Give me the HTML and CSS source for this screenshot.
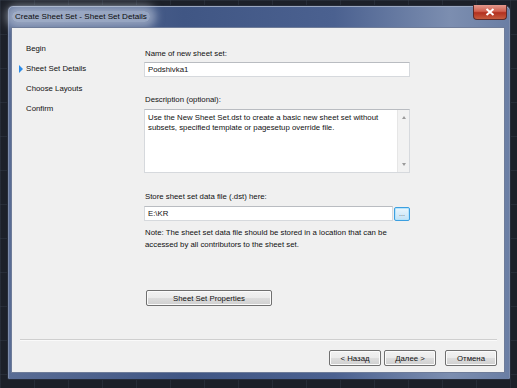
FILE: index.html
```html
<!DOCTYPE html>
<html lang="en">
<head>
    <meta charset="UTF-8">
    <title>Create Sheet Set - Sheet Set Details</title>
    <link rel="stylesheet" href="styles.css">
</head>
<body>
    <div class="window">
        <!-- Title bar -->
        <div class="titlebar">
            <span class="title">Create Sheet Set - Sheet Set Details</span>
            <div class="close">
                <svg width="10" height="8" viewBox="0 0 10 8"><path d="M1.5 1 L8.5 7 M8.5 1 L1.5 7" stroke="#fff" stroke-width="2"/></svg>
            </div>
        </div>

        <div class="client">
            <div class="content">
                <!-- Wizard steps -->
                <ul class="steps">
                    <li>Begin</li>
                    <li class="current">Sheet Set Details</li>
                    <li>Choose Layouts</li>
                    <li>Confirm</li>
                </ul>

                <!-- Page fields -->
                <div class="page">
                    <label class="label first">Name of new sheet set:</label>
                    <div class="input">Podshivka1</div>

                    <label class="label desc">Description (optional):</label>
                    <div class="textarea">
                        <div class="textarea-text">Use the New Sheet Set.dst to create a basic new sheet set without subsets, specified template or pagesetup override file.</div>
                        <div class="scrollbar">
                            <span class="arrow up"></span>
                            <span class="arrow down"></span>
                        </div>
                    </div>

                    <label class="label store">Store sheet set data file (.dst) here:</label>
                    <div class="path-row">
                        <div class="input path">E:\KR</div>
                        <button class="browse">...</button>
                    </div>
                    <p class="note">Note: The sheet set data file should be stored in a location that can be accessed by all contributors to the sheet set.</p>

                    <button class="btn props">Sheet Set Properties</button>
                </div>
            </div>

            <div class="footer">
                <button class="btn nav">&lt; Назад</button>
                <button class="btn nav next">Далее &gt;</button>
                <button class="btn nav">Отмена</button>
            </div>
        </div>
    </div>
</body>
</html>
```

FILE: styles.css
```css
body {
    margin: 0;
    height: 388px;
    overflow: hidden;
    background-color: #1c2029;
    background-image:
        linear-gradient(to right, rgba(60, 68, 82, 0.35) 1px, transparent 1px),
        linear-gradient(to bottom, rgba(60, 68, 82, 0.35) 1px, transparent 1px);
    background-size: 34px 34px;
    font-family: "Liberation Sans", Arial, sans-serif;
    font-size: 7.8px;
    color: #111;
}
.window {
    margin: 5px 0 0 7px;
    width: 504px;
    height: 375px;
    box-sizing: border-box;
    display: flex;
    flex-direction: column;
    border: 1px solid #252b38;
    border-radius: 6px 6px 2px 2px;
    background: linear-gradient(to right, #5a6d95 0%, #405684 35%, #4b6190 65%, #7c8eb0 88%, #6a7ea4 100%);
    box-shadow: inset 0 1px 0 #9aa7c0, inset 1px 0 0 #7d8cab, inset -1px 0 0 #7d8cab;
}
.titlebar {
    height: 21px;
    display: flex;
    align-items: center;
    justify-content: space-between;
    padding-left: 4px;
}
.title {
    font-family: "Liberation Sans", Arial, sans-serif;
    font-size: 8.1px;
    color: #0c0c0c;
    padding: 1px 3px;
    background: rgba(215, 224, 238, 0.55);
    border-radius: 8px;
    box-shadow: 0 0 8px 6px rgba(215, 224, 238, 0.5);
}
.close {
    align-self: flex-start;
    margin: -1px 3px 0 0;
    width: 34px;
    height: 15px;
    display: flex;
    align-items: center;
    justify-content: center;
    box-sizing: border-box;
    border: 1px solid #5a2a2a;
    border-top: none;
    border-radius: 0 0 4px 4px;
    background: linear-gradient(to bottom, #e4998e 0%, #d0604f 45%, #b2301f 55%, #c55b3e 100%);
}
.client {
    flex: 1;
    margin: 0 5px 6px 3px;
    display: flex;
    flex-direction: column;
    background: #f0f0f0;
    border: 1px solid #6e7c99;
}
.content {
    flex: 1;
    display: flex;
}
.steps {
    list-style: none;
    margin: 0;
    padding: 11px 0 0 14px;
    width: 118px;
}
.steps li {
    height: 20px;
    line-height: 20px;
    position: relative;
}
.steps li.current::before {
    content: "";
    position: absolute;
    left: -7px;
    top: 6px;
    border-left: 4px solid #2b8be8;
    border-top: 4px solid transparent;
    border-bottom: 4px solid transparent;
}
.page {
    width: 266px;
    display: flex;
    flex-direction: column;
}
.label {
    display: block;
    height: 12px;
    line-height: 12px;
    padding-left: 1px;
}
.label.first {
    margin-top: 20px;
    margin-bottom: 2px;
}
.label.desc {
    margin-top: 17px;
    margin-bottom: 3px;
}
.label.store {
    margin-top: 18px;
    margin-bottom: 3px;
}
.input {
    height: 15px;
    line-height: 14px;
    box-sizing: border-box;
    padding-left: 3px;
    background: #fff;
    border: 1px solid #d6d9dd;
    border-top-color: #b9bcc1;
}
.textarea {
    height: 64px;
    box-sizing: border-box;
    display: flex;
    background: #fff;
    border: 1px solid #d6d9dd;
    border-top-color: #b9bcc1;
}
.textarea-text {
    flex: 1;
    padding: 3px 3px 0 3px;
    line-height: 10px;
}
.scrollbar {
    width: 11px;
    background: #f2f2f2;
    border-left: 1px solid #e6e6e6;
    display: flex;
    flex-direction: column;
    justify-content: space-between;
    align-items: center;
    padding: 6px 0 6px;
}
.arrow {
    width: 0;
    height: 0;
    border-left: 2.5px solid transparent;
    border-right: 2.5px solid transparent;
}
.arrow.up {
    border-bottom: 3px solid #9a9a9a;
}
.arrow.down {
    border-top: 3px solid #9a9a9a;
}
.path-row {
    display: flex;
    gap: 1px;
}
.input.path {
    flex: 1;
}
.browse {
    width: 16px;
    height: 14px;
    padding: 0;
    margin-top: 1px;
    font-family: "Liberation Sans", Arial, sans-serif;
    font-size: 7px;
    line-height: 8px;
    color: #555;
    box-sizing: border-box;
    border: 1px solid #3c9fe0;
    border-radius: 2px;
    background: linear-gradient(to bottom, #eaf6fd, #c2e2f6);
    box-shadow: inset 0 0 0 1px #b6e4fb;
}
.note {
    margin: 6px 0 0 0;
    padding-left: 1px;
    line-height: 12px;
    width: 262px;
}
.btn {
    font-family: "Liberation Sans", Arial, sans-serif;
    font-size: 7.8px;
    color: #111;
    padding: 0;
    height: 16px;
    box-sizing: border-box;
    border: 1px solid #707070;
    border-radius: 2px;
    background: linear-gradient(to bottom, #f2f2f2 0%, #ebebeb 48%, #dddddd 52%, #cfcfcf 100%);
    box-shadow: inset 0 0 0 1px #fbfbfb;
}
.btn.props {
    width: 126px;
    margin: 39px 0 0 2px;
}
.footer {
    margin: 0 7px 0 8px;
    height: 33px;
    box-sizing: border-box;
    border-top: 1px solid #cfcfcf;
    box-shadow: inset 0 1px 0 #fafafa;
    display: flex;
    justify-content: flex-end;
    padding-top: 10px;
}
.btn.nav {
    width: 52px;
}
.btn.next {
    margin: 0 9px 0 3px;
}
```
